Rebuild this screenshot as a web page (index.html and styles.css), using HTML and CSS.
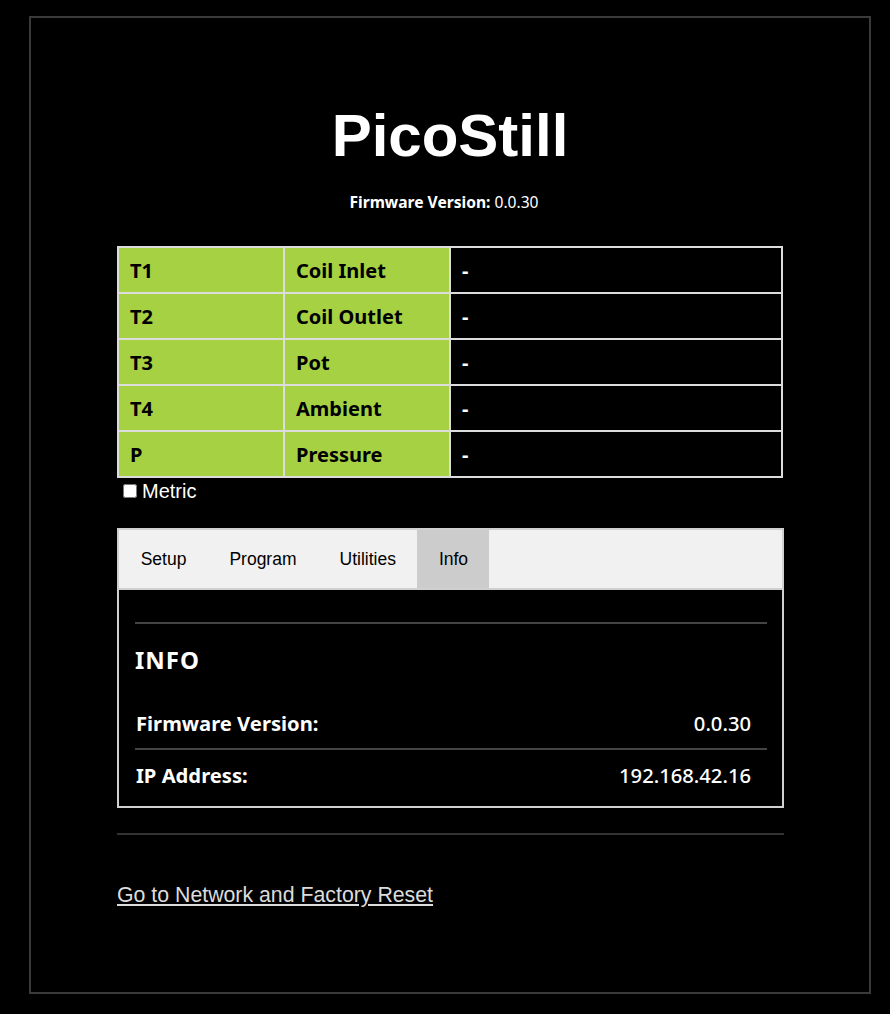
FILE: index.html
```html
<!DOCTYPE html>
<html lang="en">
<head>
<meta charset="utf-8">
<title>PicoStill</title>
<link rel="stylesheet" href="styles.css">
</head>
<body>
<div class="page">
  <h1 class="title">PicoStill</h1>
  <p class="fw"><b>Firmware Version:</b> 0.0.30</p>
  <div class="content">
    <table class="sensors">
      <colgroup>
        <col class="col-q">
        <col class="col-q">
        <col class="col-h">
      </colgroup>
      <tr><td class="lbl">T1</td><td class="lbl">Coil Inlet</td><td class="val">-</td></tr>
      <tr><td class="lbl">T2</td><td class="lbl">Coil Outlet</td><td class="val">-</td></tr>
      <tr><td class="lbl">T3</td><td class="lbl">Pot</td><td class="val">-</td></tr>
      <tr><td class="lbl">T4</td><td class="lbl">Ambient</td><td class="val">-</td></tr>
      <tr><td class="lbl">P</td><td class="lbl">Pressure</td><td class="val">-</td></tr>
    </table>
    <label class="metric"><input type="checkbox" class="metric-box">Metric</label>
    <div class="tabs">
      <div class="tabbar">
        <span class="tab">Setup</span>
        <span class="tab">Program</span>
        <span class="tab">Utilities</span>
        <span class="tab active">Info</span>
      </div>
      <div class="panel">
        <hr class="panel-rule">
        <h2 class="panel-title">INFO</h2>
        <div class="info-row">
          <span class="info-key">Firmware Version:</span>
          <span class="info-val">0.0.30</span>
        </div>
        <div class="info-row">
          <span class="info-key">IP Address:</span>
          <span class="info-val">192.168.42.16</span>
        </div>
      </div>
    </div>
    <hr class="sep">
    <p class="link-line"><a class="reset-link" href="#">Go to Network and Factory Reset</a></p>
  </div>
</div>
</body>
</html>
```

FILE: styles.css
```css
html, body {
  margin: 0;
  padding: 0;
  background: #000;
}
body {
  font-family: "Liberation Sans", Arial, sans-serif;
  color: #fff;
}
.page {
  margin: 16px 19px 0 29px;
  border: 2px solid #3a3a3a;
  padding: 84px 0 85px;
}
.title {
  margin: 0;
  font-family: "Liberation Sans", Arial, sans-serif;
  font-weight: bold;
  font-size: 60px;
  line-height: 68px;
  text-align: center;
  color: #fff;
}
.fw {
  margin: 22px 0 0;
  padding-right: 12px;
  font-family: "Noto Sans", sans-serif;
  font-size: 15.6px;
  line-height: 20px;
  text-align: center;
  color: #fff;
}
.fw b {
  font-weight: bold;
}
.content {
  width: 667px;
  margin: 0 auto;
  padding-left: 1px;
}
.sensors {
  margin-top: 34px;
  width: 666px;
  border-collapse: collapse;
  table-layout: fixed;
  font-family: "Noto Sans", sans-serif;
  font-weight: bold;
  font-size: 20px;
}
.col-q {
  width: 25%;
}
.col-h {
  width: 50%;
}
.sensors td {
  border: 2px solid #dcdcdc;
  height: 44px;
  padding: 0 11px;
  box-sizing: content-box;
  vertical-align: middle;
}
.sensors td.lbl {
  background: #a5d143;
  color: #000;
}
.sensors td.val {
  background: #000;
  color: #fff;
}
.metric {
  display: flex;
  align-items: center;
  margin-top: 2px;
  height: 22px;
  font-size: 20px;
  line-height: 22px;
  color: #fff;
}
.metric-box {
  width: 14px;
  height: 14px;
  margin: 0 5px 0 6px;
}
.tabs {
  margin-top: 26px;
  border: 2px solid #d0d0d0;
}
.tabbar {
  display: flex;
  background: #f1f1f1;
  border-bottom: 2px solid #d0d0d0;
  height: 58px;
}
.tab {
  display: flex;
  align-items: center;
  padding: 0 21.3px 0 21.7px;
  font-size: 17.5px;
  color: #000;
}
.tab.active {
  background: #cccccc;
}
.panel {
  padding: 32px 15px 6px 16px;
  background: #000;
}
.panel-rule {
  margin: 0;
  border: 0;
  height: 2px;
  background: #444;
}
.panel-title {
  margin: 21px 0 23px;
  padding-left: 0;
  font-family: "Noto Sans", sans-serif;
  font-weight: bold;
  font-size: 24px;
  line-height: 30px;
  letter-spacing: 1px;
  color: #fff;
}
.info-row {
  display: flex;
  justify-content: space-between;
  align-items: center;
  height: 50px;
  padding: 0 16px 0 1px;
  font-family: "Noto Sans", sans-serif;
  font-size: 20.2px;
  color: #fff;
}
.info-row + .info-row {
  border-top: 2px solid #444;
}
.info-key {
  font-weight: bold;
}
.info-val {
  font-weight: 500;
}
.sep {
  margin: 25px 0 0;
  border: 0;
  height: 2px;
  background: #333;
}
.link-line {
  margin: 48px 0 0;
  font-size: 21.3px;
  line-height: 24px;
}
.reset-link {
  color: #dcdcdc;
  text-decoration: underline;
}
```
